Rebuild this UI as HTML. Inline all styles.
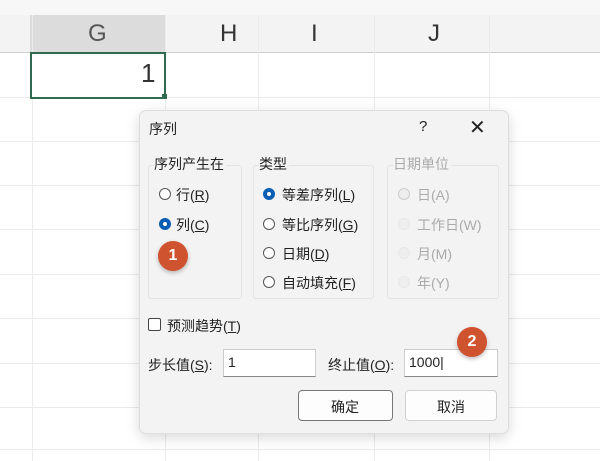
<!DOCTYPE html><html><head><meta charset="utf-8"><style>
body{margin:0;width:600px;height:461px;overflow:hidden;background:#fff;font-family:"Liberation Sans","Noto Sans CJK SC",sans-serif;position:relative}
.a{position:absolute}
.t{font-size:14px;color:#222;position:absolute;white-space:nowrap}
.g{color:#aaa}
.r{position:absolute;width:12px;height:12px;border:1px solid #555;border-radius:50%;background:#fff;box-sizing:border-box}
.r.on{border:4px solid #0a5fb4}
.r.d{border-color:#ccc;background:#eee}
.grp{position:absolute;border:1px solid #e4e4e4;border-radius:3px}
.badge{position:absolute;width:30px;height:30px;border-radius:50%;background:#d0532f;color:#fff;font-weight:bold;font-size:16px;text-align:center;line-height:30px;box-shadow:0 2px 4px rgba(0,0,0,.25)}
u{text-decoration:underline}
.h{position:absolute;left:0;width:600px;height:1px;background:#ebebeb}
.v{position:absolute;top:15px;width:1px;height:446px;background:#ebebeb}
</style></head><body>
<div class="a" style="left:0;top:0;width:600px;height:15px;background:#f7f7f7"></div>
<div class="a" style="left:0;top:15px;width:600px;height:37px;background:#f3f3f3;border-bottom:1px solid #cfcfcf"></div>
<div class="a" style="left:30px;top:15px;width:135px;height:37px;background:#dcdcdc;border-bottom:2px solid #2e6b4f"></div>
<div class="v" style="left:165px"></div>
<div class="v" style="left:258px"></div>
<div class="v" style="left:374px"></div>
<div class="v" style="left:489px"></div>
<div class="v" style="left:32px"></div>
<div class="h" style="top:97px"></div>
<div class="h" style="top:141px"></div>
<div class="h" style="top:185px"></div>
<div class="h" style="top:229px"></div>
<div class="h" style="top:274px"></div>
<div class="h" style="top:318px"></div>
<div class="h" style="top:363px"></div>
<div class="h" style="top:407px"></div>
<div class="h" style="top:449px"></div>
<div class="t" style="left:88px;top:20px;font-size:24px;color:#555">G</div>
<div class="t" style="left:220px;top:20px;font-size:24px;color:#333">H</div>
<div class="t" style="left:311px;top:20px;font-size:24px;color:#333">I</div>
<div class="t" style="left:428px;top:20px;font-size:24px;color:#333">J</div>
<div class="a" style="left:30px;top:52px;width:132px;height:43px;border:2px solid #2e6b4f;background:#fff"></div>
<div class="a" style="left:162px;top:94px;width:5px;height:5px;background:#2e6b4f"></div>
<div class="t" style="left:141px;top:58px;font-size:26px;color:#333">1</div>

<div class="a" style="left:139px;top:110px;width:368px;height:322px;background:#f3f3f3;border:1px solid #ddd;border-radius:7px;box-shadow:0 4px 14px rgba(0,0,0,.15)"></div>
<div class="t" style="left:149px;top:119px">序列</div>
<div class="t" style="left:419px;top:118px;font-size:15px">?</div>
<div class="t" style="left:469px;top:115px;font-size:20px">✕</div>
<div class="grp" style="left:148px;top:165px;width:92px;height:132px"></div>
<div class="grp" style="left:253px;top:165px;width:119px;height:132px"></div>
<div class="grp" style="left:387px;top:165px;width:110px;height:132px"></div>
<div class="t" style="left:154px;top:154px;background:#f3f3f3;padding-right:2px">序列产生在</div>
<div class="t" style="left:259px;top:154px;background:#f3f3f3;padding-right:2px">类型</div>
<div class="t g" style="left:393px;top:154px;background:#f3f3f3;padding-right:2px">日期单位</div>
<div class="r" style="left:159px;top:188px"></div><div class="t" style="left:176px;top:185px">行(<u>R</u>)</div>
<div class="r on" style="left:159px;top:218px"></div><div class="t" style="left:176px;top:215px">列(<u>C</u>)</div>
<div class="r on" style="left:263px;top:188px"></div><div class="t" style="left:282px;top:185px">等差序列(<u>L</u>)</div>
<div class="r" style="left:263px;top:218px"></div><div class="t" style="left:282px;top:215px">等比序列(<u>G</u>)</div>
<div class="r" style="left:263px;top:247px"></div><div class="t" style="left:282px;top:244px">日期(<u>D</u>)</div>
<div class="r" style="left:263px;top:276px"></div><div class="t" style="left:282px;top:273px">自动填充(<u>F</u>)</div>
<div class="r d" style="left:398px;top:188px"></div><div class="t g" style="left:417px;top:185px">日(A)</div>
<div class="r d" style="left:398px;top:218px;border-color:#e8e8e8"></div><div class="t g" style="left:417px;top:215px">工作日(W)</div>
<div class="r d" style="left:398px;top:247px;border-color:#e8e8e8"></div><div class="t g" style="left:417px;top:244px">月(M)</div>
<div class="r d" style="left:398px;top:276px;border-color:#e8e8e8"></div><div class="t g" style="left:417px;top:273px">年(Y)</div>
<div class="badge" style="left:158px;top:241px">1</div>
<div class="a" style="left:148px;top:318px;width:13px;height:13px;border:1px solid #444;border-radius:2px;background:#fff;box-sizing:border-box"></div>
<div class="t" style="left:167px;top:316px">预测趋势(<u>T</u>)</div>
<div class="t" style="left:148px;top:355px">步长值(<u>S</u>):</div>
<div class="a" style="left:223px;top:349px;width:93px;height:28px;background:#fff;border:1px solid #ccc;border-bottom-color:#888;box-sizing:border-box"></div>
<div class="t" style="left:228px;top:354px">1</div>
<div class="t" style="left:328px;top:355px">终止值(<u>O</u>):</div>
<div class="a" style="left:404px;top:349px;width:94px;height:28px;background:#fff;border:1px solid #ccc;border-bottom-color:#888;box-sizing:border-box"></div>
<div class="t" style="left:409px;top:354px">1000|</div>
<div class="badge" style="left:457px;top:327px">2</div>
<div class="a" style="left:298px;top:390px;width:95px;height:31px;background:#fdfdfd;border:1px solid #777;border-radius:4px;box-sizing:border-box"></div>
<div class="t" style="left:331px;top:397px">确定</div>
<div class="a" style="left:405px;top:390px;width:92px;height:31px;background:#fdfdfd;border:1px solid #d0d0d0;border-radius:4px;box-sizing:border-box"></div>
<div class="t" style="left:437px;top:397px">取消</div>
</body></html>
